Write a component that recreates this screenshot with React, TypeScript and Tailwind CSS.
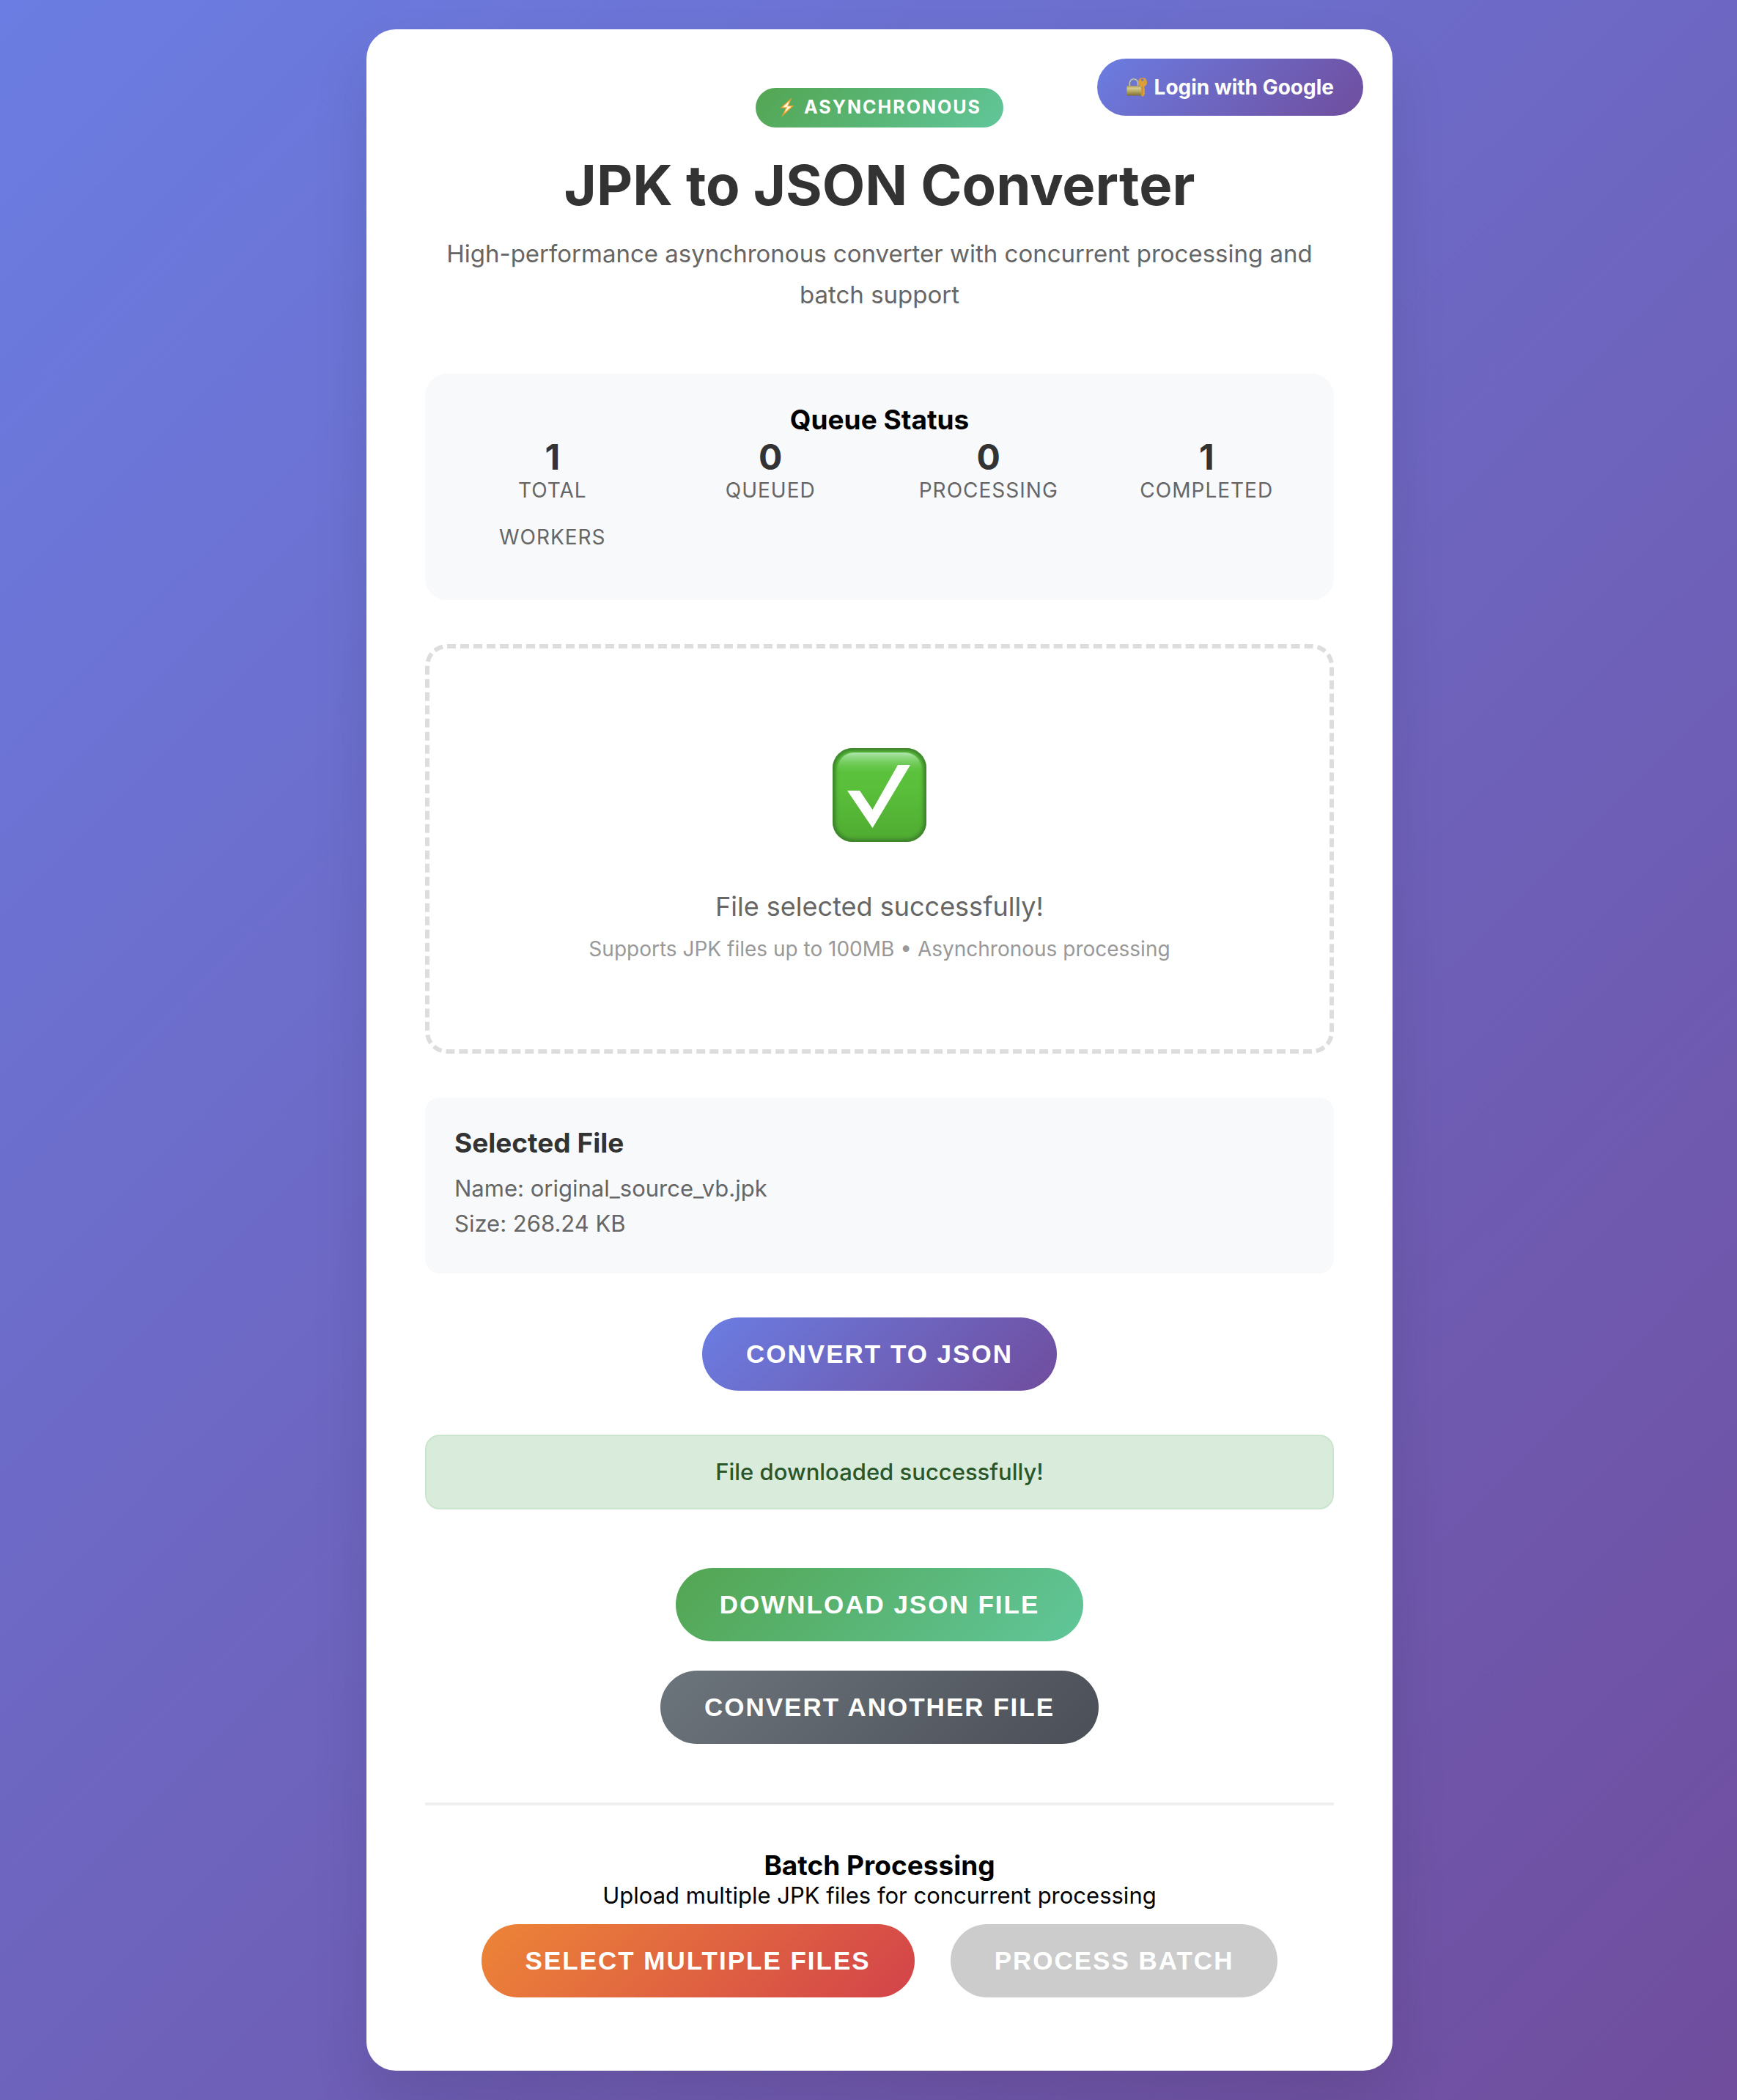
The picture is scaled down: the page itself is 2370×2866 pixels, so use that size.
import type { ButtonHTMLAttributes } from 'react';

const stats = [
  { value: 1, label: 'Total Workers' },
  { value: 0, label: 'Queued' },
  { value: 0, label: 'Processing' },
  { value: 1, label: 'Completed' },
];

function BoltIcon() {
  return (
    <svg viewBox="0 0 26 28" className="h-7 w-[26px]" aria-hidden="true">
      <path d="M19.500 0 3.500 14.500H11L5 27 22.500 11H15Z" fill="#f2a02e" />
      <path d="M16.500 4.500 7 13.300H13L9 21 19 12.200H13Z" fill="#fffbe0" />
    </svg>
  );
}

function LockIcon() {
  return (
    <svg viewBox="0 0 30 30" className="h-[30px] w-[30px]" aria-hidden="true">
      <defs>
        <linearGradient id="lock-body" x1="0" y1="0" x2="0" y2="1">
          <stop offset="0" stopColor="#a89a58" />
          <stop offset="0.25" stopColor="#d6cb90" />
          <stop offset="0.6" stopColor="#b3a55f" />
          <stop offset="1" stopColor="#7d6d33" />
        </linearGradient>
      </defs>
      <path d="M4.500 14V9.500a5.500 5.500 0 0 1 11 0V14" fill="none" stroke="#7f8898" strokeWidth="3" />
      <path d="M4.300 14V9.500a5.700 5.700 0 0 1 11.400 0V14" fill="none" stroke="#c9cdd4" strokeWidth="1.200" />
      <rect x="0.500" y="13" width="21.500" height="13.500" rx="1" fill="url(#lock-body)" />
      <path
        fillRule="evenodd"
        d="M21.800 2a6.300 6.300 0 0 1 2.600 12v3l1 1-1 1.500 1 1-1 1.500 1 1.200-1 1.300v1.500l-2.300 2-2.300-2V14a6.300 6.300 0 0 1 2-12Zm0 1.300a1.700 1.700 0 1 0 0 3.400 1.700 1.700 0 0 0 0-3.400Z"
        fill="#dc9f38"
      />
      <path d="M21.300 14v12" stroke="#b87a22" strokeWidth="0.800" />
    </svg>
  );
}

function CheckIcon() {
  return (
    <svg viewBox="0 0 128 128" className="h-32 w-32" aria-hidden="true">
      <defs>
        <linearGradient id="face" x1="0" y1="0" x2="0" y2="1">
          <stop offset="0" stopColor="#5cc43e" />
          <stop offset="0.4" stopColor="#5ac03b" />
          <stop offset="1" stopColor="#4fab31" />
        </linearGradient>
        <linearGradient id="gloss" x1="0" y1="0" x2="0" y2="1">
          <stop offset="0" stopColor="#b0e6ad" />
          <stop offset="1" stopColor="#5cc43e" stopOpacity="0" />
        </linearGradient>
        <filter id="edge-blur">
          <feGaussianBlur stdDeviation="2.500" />
        </filter>
        <clipPath id="tile">
          <rect width="128" height="128" rx="27" />
        </clipPath>
      </defs>
      <g clipPath="url(#tile)">
        <rect width="128" height="128" fill="url(#face)" />
        <rect width="128" height="128" rx="27" fill="none" stroke="#3a8029" strokeWidth="8" filter="url(#edge-blur)" />
        <path d="M7 36V28A22 22 0 0 1 29 6h70a22 22 0 0 1 22 22v8Z" fill="url(#gloss)" />
      </g>
      <path d="M20 58h17l17.500 26L89 23h17L54.500 109Z" fill="#fff" />
    </svg>
  );
}

function PillButton({ className, ...props }: ButtonHTMLAttributes<HTMLButtonElement>) {
  return (
    <button
      type="button"
      className={`h-[100px] rounded-full px-[60px] font-['Liberation_Sans',Arial,sans-serif] text-[35px] font-bold uppercase tracking-[2px] text-white ${className}`}
      {...props}
    />
  );
}

export default function App() {
  return (
    <div className="min-h-screen bg-[linear-gradient(135deg,#6b7de2_0%,#704d9d_100%)] py-10 pr-10 pl-[70px] font-['Inter',sans-serif]">
      <main className="relative mx-auto max-w-[1400px] rounded-[40px] bg-white p-20 text-center shadow-[0_40px_80px_rgba(0,0,0,0.1)]">
        <button
          type="button"
          className="absolute top-10 right-10 flex h-[78px] items-center gap-2 rounded-full bg-[linear-gradient(135deg,#6b7de2_0%,#704d9d_100%)] px-10 text-[28px] font-bold text-white"
        >
          <LockIcon />
          Login with Google
        </button>

        <header>
          <div className="mx-auto flex h-[54px] w-fit items-center gap-[10px] rounded-full bg-[linear-gradient(135deg,#53a551_0%,#60c69a_100%)] px-[30px] text-[25px] font-bold uppercase tracking-[2px] text-white">
            <BoltIcon />
            Asynchronous
          </div>
          <h1 className="mt-[30px] text-[76px] leading-[96px] font-bold text-[#333]">JPK to JSON Converter</h1>
          <p className="mt-[18px] text-[33px] leading-[56px] text-[#666]">
            High-performance asynchronous converter with concurrent processing and batch support
          </p>
        </header>

        <section className="mt-20 rounded-[30px] bg-[#f8f9fb] px-10 pt-10 pb-[54px]">
          <h2 className="text-[37px] leading-[46px] font-bold text-black">Queue Status</h2>
          <dl className="grid grid-cols-4 gap-[30px]">
            {stats.map((stat) => (
              <div key={stat.label} className="flex flex-col-reverse justify-end px-[30px]">
                <dt className="text-[28px] leading-[64px] uppercase tracking-[1px] text-[#666]">{stat.label}</dt>
                <dd className="-mb-[15px] text-[48px] leading-[56px] font-bold text-[#333]">{stat.value}</dd>
              </div>
            ))}
          </dl>
        </section>

        <section className="mt-[60px] flex flex-col items-center rounded-[30px] border-[6px] border-dashed border-[#ddd] pt-[136px] pb-[119px]">
          <CheckIcon />
          <p className="mt-16 text-[36px] leading-[48px] text-[#666]">File selected successfully!</p>
          <p className="mt-4 text-[28px] leading-[36px] text-[#999]">
            Supports JPK files up to 100MB • Asynchronous processing
          </p>
        </section>

        <section className="mt-[60px] rounded-[20px] bg-[#f8f9fb] px-10 pt-10 pb-11 text-left">
          <h2 className="text-[37px] leading-[44px] font-bold text-[#333]">Selected File</h2>
          <div className="mt-4 text-[31px] leading-[48px] text-[#666]">
            <p>Name: original_source_vb.jpk</p>
            <p>Size: 268.24 KB</p>
          </div>
        </section>

        <div className="mt-[60px] flex justify-center">
          <PillButton className="bg-[linear-gradient(135deg,#6b7de2_0%,#704d9d_100%)]">Convert to JSON</PillButton>
        </div>

        <p
          role="status"
          className="mt-[60px] rounded-[20px] border-2 border-[#cae5cd] bg-[#d9ecdc] py-[29px] text-[31px] leading-[40px] font-medium text-[#2a562a]"
        >
          File downloaded successfully!
        </p>

        <div className="mt-20 flex flex-col items-center gap-10">
          <PillButton className="bg-[linear-gradient(135deg,#53a551_0%,#60c69a_100%)]">Download JSON File</PillButton>
          <PillButton className="bg-[linear-gradient(135deg,#6d757c_0%,#4b4f57_100%)]">Convert Another File</PillButton>
        </div>

        <section className="mt-20 border-t-4 border-[#eee] pt-[60px] pb-5 text-black">
          <h2 className="text-[37px] leading-[44px] font-bold">Batch Processing</h2>
          <p className="text-[31px] leading-[38px]">Upload multiple JPK files for concurrent processing</p>
          <div className="mt-5 flex flex-wrap justify-center gap-x-[49px] gap-y-10">
            <PillButton className="bg-[linear-gradient(135deg,#ed8537_0%,#d3434a_100%)]">Select Multiple Files</PillButton>
            <PillButton disabled className="bg-[#ccc]">
              Process Batch
            </PillButton>
          </div>
        </section>
      </main>
    </div>
  );
}
